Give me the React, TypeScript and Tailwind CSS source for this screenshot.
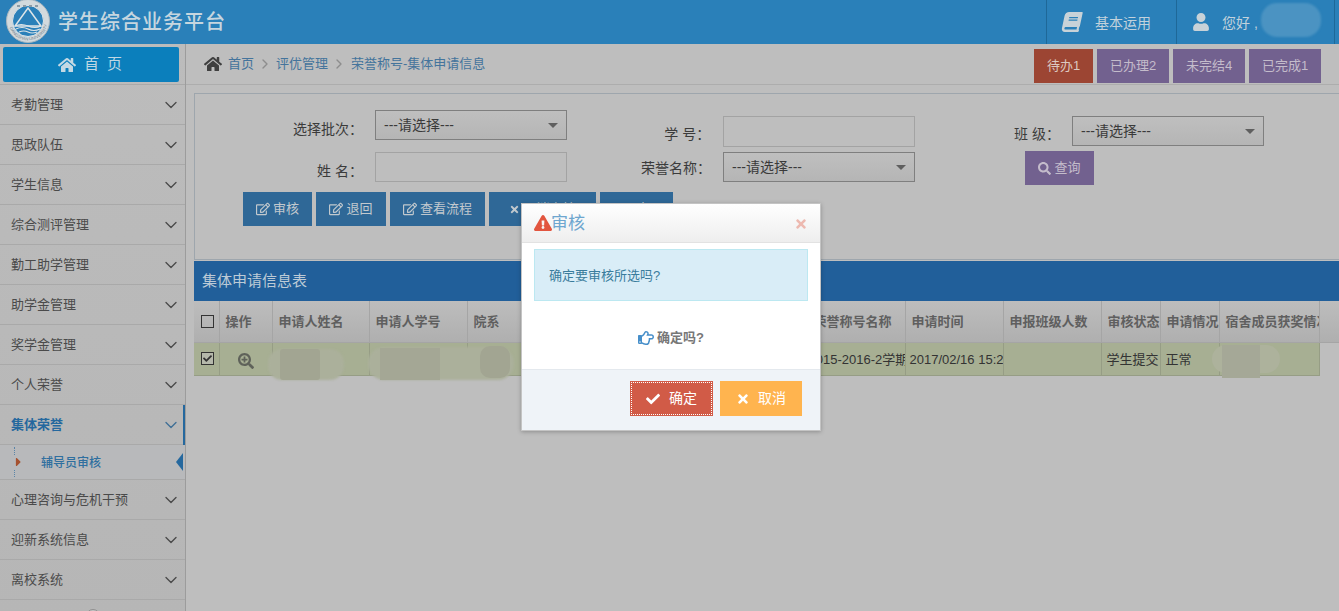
import React from "react";
import { ChevronDown, ChevronRight } from "lucide-react";
import { FaHome, FaBook, FaUser, FaRegEdit, FaTimes, FaSearch, FaSearchPlus, FaCheck, FaRegHandPointRight, FaExclamationTriangle, FaCaretRight } from "react-icons/fa";

const font = { fontFamily: '"Liberation Sans","Noto Sans CJK SC",sans-serif' };

function Logo() {
  return (
    <svg width="48" height="46" viewBox="0 0 48 46" className="shrink-0">
      <circle cx="24" cy="22" r="21.5" fill="#d3dadd" stroke="#aab7bf" strokeWidth="1" />
      <circle cx="24" cy="22" r="15.5" fill="#2a80b9" stroke="#dfe5e8" strokeWidth="1" />
      <path d="M24 9 L37 27 H11 Z" fill="none" stroke="#dfe5e8" strokeWidth="1.5" />
      <path d="M11 27 q6 -3 13 0 t13 0 M12 30 q6 -3 12 0 t12 0 M15 33 q5 -2 9 0 t9 0" fill="none" stroke="#dfe5e8" strokeWidth="1.1" />
      <path id="lg" d="M4.5 25 a19.8 19.8 0 0 0 39 0" fill="none" />
      <text fontSize="4.2" fill="#6d7f8c" fontFamily="Liberation Sans"><textPath href="#lg" startOffset="4">DANGSHAN UNIVERSITY</textPath></text>
      <path d="M13 7 l22 0" stroke="#8b9ba6" strokeWidth="2" strokeDasharray="3 3" />
    </svg>
  );
}

const menu1 = ["考勤管理", "思政队伍", "学生信息", "综合测评管理", "勤工助学管理", "助学金管理", "奖学金管理", "个人荣誉"];
const menu2 = ["心理咨询与危机干预", "迎新系统信息", "离校系统"];

function MenuItem({ label, active }: { label: string; active?: boolean }) {
  return (
    <div className={`h-10 flex items-center justify-between pl-[11px] pr-[4px] border-b border-[#a9a9a9] text-[13px] ${active ? "text-[#25689e] font-bold" : "text-[#4a4a4a]"}`}>
      <span>{label}</span>
      <ChevronDown size={20} strokeWidth={1.6} className={active ? "text-[#3f6f96]" : "text-[#4a4a4a]"} />
    </div>
  );
}

function Caret() {
  return <span className="w-0 h-0 border-x-[5px] border-x-transparent border-t-[5px] border-t-[#5f5f5f]" />;
}

function Select({ cls }: { cls: string }) {
  return (
    <div className={`h-[30px] w-[192px] flex items-center justify-between pl-2 pr-[8px] border border-[#7f7f7f] bg-gradient-to-b from-[#bfbfbf] to-[#b5b5b5] text-[14px] text-[#3a3a3a] ${cls}`}>
      <span className="mt-[1px]">---请选择---</span>
      <Caret />
    </div>
  );
}

function ActionBtn({ w, icon, label }: { w: string; icon: React.ReactNode; label: string }) {
  return (
    <button className={`h-[34px] ${w} bg-[#2f6897] text-[#c2c9ce] text-[13px] flex items-center justify-center gap-[3px]`}>
      {icon}
      <span>{label}</span>
    </button>
  );
}

function TopBtn({ w, label, red }: { w: string; label: string; red?: boolean }) {
  return (
    <div className={`h-[34px] ${w} flex items-center justify-center text-[13px] text-[#c4bccb] ${red ? "bg-[#9c4533] text-[#dcc8c0]" : "bg-[#72618f]"}`}>{label}</div>
  );
}

const cols = [25, 53, 97, 98, 98, 95, 147, 98, 98, 98, 59, 59, 100, 20];
const heads = ["", "操作", "申请人姓名", "申请人学号", "院系", "", "", "荣誉称号名称", "申请时间", "申报班级人数", "审核状态", "申请情况", "宿舍成员获奖情况", ""];
const tdc = "bg-[#a7af93] border-r border-b border-[#969d85]";

export default function App() {
  return (
    <div style={font} className="relative w-full h-[611px] overflow-hidden bg-[#bebebe] flex flex-col">
      {/* header */}
      <header className="h-11 shrink-0 bg-[#2a80b9] flex items-center justify-between">
        <div className="flex items-center pl-[4px] gap-[6px]">
          <Logo />
          <span className="text-[20px] tracking-[1px] text-[#c6d6df] font-medium">学生综合业务平台</span>
        </div>
        <div className="flex h-full pr-[4px]">
          <div className="w-[130px] h-full border-l border-[#1e6898] flex items-center pl-[15px] gap-[13px] text-[14px] text-[#c2d2dc]">
            <FaBook size={20} className="text-[#c8d2d8] -skew-x-[12deg]" />
            <span className="mt-[2px]">基本运用</span>
          </div>
          <div className="relative w-[159px] h-full border-x border-[#1e6898] flex items-center pl-[15px] gap-[12px] text-[14px] text-[#c2d2dc]">
            <FaUser size={18} className="text-[#c8d2d8]" />
            <span className="mt-[2px]">您好 ,</span>
            <div className="absolute left-[84px] top-[3px] w-[60px] h-[34px] rounded-[16px] bg-[#4b93c2] blur-[1px]" />
          </div>
        </div>
      </header>

      <div className="flex flex-1 min-h-0">
        {/* sidebar */}
        <aside className="w-[186px] shrink-0 bg-gradient-to-b from-[#bcbcbc] to-[#b6b6b6] border-r border-[#9c9c9c] pt-[3px]">
          <div className="h-[37px] pl-[3px] pr-[6px]">
            <div className="h-[35px] rounded-[2px] bg-[#0b7fbc] text-[#bfd7e3] flex items-center justify-center gap-[8px] text-[15px]">
              <FaHome size={18} className="text-[#c4d9e4]" />
              <span className="tracking-[8px] -mr-[6px]">首页</span>
            </div>
          </div>
          <div className="border-t border-[#a9a9a9]">
            {menu1.map((m) => <MenuItem key={m} label={m} />)}
            <div className="relative">
              <div className="absolute right-0 top-0 bottom-0 w-[2px] bg-[#25689e]" />
              <MenuItem label="集体荣誉" active />
              <div className="relative h-[35px] border-b border-[#a9a9a9] bg-[#b8b9bb] flex items-center pl-[41px] pt-[1px] text-[12px] font-medium text-[#2f6f9f]">
                <div className="absolute left-[14px] top-[2px] bottom-[2px] border-l border-dotted border-[#5a85a8]" />
                <div className="absolute left-[14px] top-[10px] h-[14px] w-[9px] bg-[#b8b9bb] flex items-center">
                  <FaCaretRight size={14} className="text-[#a5512f]" />
                </div>
                <span>辅导员审核</span>
                <span className="absolute right-[2px] top-[8px] w-0 h-0 border-y-[9px] border-y-transparent border-r-[7px] border-r-[#25689e]" />
              </div>
            </div>
            {menu2.map((m) => <MenuItem key={m} label={m} />)}
            <div className="flex justify-center pt-[9px]">
              <div className="w-[14px] h-[14px] rounded-full border border-[#8f8f8f] bg-[#c4c4c4]" />
            </div>
          </div>
        </aside>

        {/* main */}
        <main className="flex-1 min-w-0 flex flex-col">
          <div className="h-[41px] shrink-0 border-b border-[#adadad] flex items-center justify-between pl-[18px] pr-[18px]">
            <div className="flex items-center text-[13px] text-[#44749c]">
              <FaHome size={18} className="text-[#3f3f3f] mr-[6px] -mt-[1px]" />
              <span>首页</span>
              <ChevronRight size={16} className="mx-[3px] text-[#8d8d8d]" />
              <span>评优管理</span>
              <ChevronRight size={16} className="ml-[3px] mr-[4px] text-[#8d8d8d]" />
              <span>荣誉称号-集体申请信息</span>
            </div>
            <div className="flex gap-1 mt-[3px]">
              <TopBtn w="w-[59px]" label="待办1" red />
              <TopBtn w="w-[72px]" label="已办理2" />
              <TopBtn w="w-[72px]" label="未完结4" />
              <TopBtn w="w-[72px]" label="已完成1" />
            </div>
          </div>

          <div className="pl-2 pt-2 flex flex-col">
            {/* search form */}
            <section className="h-[167px] border border-[#9ea6ad] border-r-0 pt-[16px] text-[14px] text-[#3b3b3b]">
              <div className="flex">
                <div className="w-[372px] shrink-0 flex flex-col gap-3">
                  <div className="flex items-center h-[30px]">
                    <span className="w-[168px] text-right mt-[8px]">选择批次：</span>
                    <Select cls="ml-[12px]" />
                  </div>
                  <div className="flex items-center h-[30px]">
                    <span className="w-[168px] text-right mt-[8px]">姓 名：</span>
                    <div className="ml-[12px] w-[192px] h-[30px] border border-[#a3a3a3]" />
                  </div>
                </div>
                <div className="w-[348px] shrink-0 flex flex-col pt-[6px] gap-[5px]">
                  <div className="flex items-center h-[31px]">
                    <span className="w-[144px] text-right mt-[6px]">学 号：</span>
                    <div className="ml-[13px] w-[193px] h-[31px] border border-[#a3a3a3]" />
                  </div>
                  <div className="flex items-center h-[30px]">
                    <span className="w-[144px] text-right mt-[2px]">荣誉名称：</span>
                    <Select cls="ml-[12px]" />
                  </div>
                </div>
                <div className="flex flex-col pt-[6px]">
                  <div className="flex items-center h-[30px]">
                    <span className="w-[144px] text-right mt-[7px] ml-[1px]">班 级：</span>
                    <Select cls="ml-[12px]" />
                  </div>
                  <button className="ml-[110px] mt-[5px] h-[34px] w-[69px] bg-[#72618f] text-[#c4bccb] text-[13px] flex items-center justify-center gap-[3px]">
                    <FaSearch size={13} />
                    <span>查询</span>
                  </button>
                </div>
              </div>
              <div className="flex gap-1 pl-[48px] mt-[7px]">
                <ActionBtn w="w-[69px]" icon={<FaRegEdit size={14} />} label="审核" />
                <ActionBtn w="w-[70px]" icon={<FaRegEdit size={14} />} label="退回" />
                <ActionBtn w="w-[95px]" icon={<FaRegEdit size={14} />} label="查看流程" />
                <ActionBtn w="w-[107px]" icon={<FaTimes size={11} />} label="取消审核" />
                <ActionBtn w="w-[73px]" icon={null} label="导出" />
              </div>
            </section>

            {/* table */}
            <div className="h-[40px] mt-px bg-[#215f9a] text-[#bccad6] text-[15px] flex items-center pl-2">集体申请信息表</div>
            <table className="table-fixed border-collapse w-[1145px] text-[13px]">
              <colgroup>
                {cols.map((c, i) => <col key={i} style={{ width: c }} />)}
              </colgroup>
              <thead>
                <tr className="h-[41px] bg-gradient-to-b from-[#bdbdbd] to-[#afafaf]">
                  {heads.map((h, i) => (
                    <th key={i} className="border-r border-b border-[#a5a5a5] px-[6px] text-left font-bold text-[#5f5f5f] whitespace-nowrap overflow-hidden">
                      {i === 0 ? <div className="w-[13px] h-[13px] border border-[#333] ml-[1px]" /> : h}
                    </th>
                  ))}
                </tr>
              </thead>
              <tbody>
                <tr className="h-[33px] text-[#333]">
                  <td className={`${tdc} px-[7px] align-top pt-[9px]`}>
                    <div className="w-[13px] h-[13px] border border-[#333] flex items-center justify-center bg-[#b5b8ab]">
                      <FaCheck size={9} className="text-[#333]" />
                    </div>
                  </td>
                  <td className={`${tdc} text-center pt-[3px] pl-[1px]`}>
                    <FaSearchPlus size={16} className="inline text-[#5f625a]" />
                  </td>
                  <td className={tdc} />
                  <td className={tdc} />
                  <td className={tdc} />
                  <td className={tdc} />
                  <td className={tdc} />
                  <td className={`${tdc} pl-[1px] pt-[2px] whitespace-nowrap overflow-hidden`}>2015-2016-2学期</td>
                  <td className={`${tdc} pl-[4px] pt-[2px] whitespace-nowrap overflow-hidden`}>2017/02/16 15:20</td>
                  <td className={tdc} />
                  <td className={`${tdc} pl-[5px] pt-[2px] whitespace-nowrap overflow-hidden`}>学生提交</td>
                  <td className={`${tdc} pl-[5px] pt-[2px]`}>正常</td>
                  <td className={tdc} />
                </tr>
              </tbody>
            </table>
          </div>
        </main>
      </div>

      {/* mosaic patches over private cells */}
      <div className="absolute left-[268px] top-[349px] w-[76px] h-[31px] rounded-[14px] bg-[#abb09b] blur-[1px]" />
      <div className="absolute left-[280px] top-[349px] w-[40px] h-[31px] rounded-[3px] bg-[#a2a592]" />
      <div className="absolute left-[368px] top-[347px] w-[146px] h-[33px] rounded-[16px] bg-[#abb09b] blur-[1px]" />
      <div className="absolute left-[380px] top-[348px] w-[60px] h-[32px] bg-[#a4a795]" />
      <div className="absolute left-[480px] top-[346px] w-[30px] h-[32px] rounded-[10px] bg-[#a2a592]" />
      <div className="absolute left-[1212px] top-[345px] w-[68px] h-[28px] rounded-[14px] bg-[#adb29c]" />
      <div className="absolute left-[1222px] top-[345px] w-[38px] h-[33px] bg-[#a5a897]" />

      {/* modal */}
      <div className="absolute left-[521px] top-[203px] w-[300px] h-[228px] bg-white border border-[#c4c4c4] shadow-[0_1px_4px_rgba(0,0,0,0.25)] flex flex-col">
        <div className="h-[39px] shrink-0 border-b border-[#e2e2e2] bg-gradient-to-b from-white to-[#eeeeee] flex items-center justify-between pl-[12px] pr-[12px]">
          <div className="flex items-center text-[17px] text-[#6ea6cf]">
            <FaExclamationTriangle size={18} className="text-[#e2553f]" />
            <span className="-ml-[1px] mt-[2px]">审核</span>
          </div>
          <FaTimes size={14} className="text-[#edb9b0] mt-[2px]" />
        </div>
        <div className="flex-1 px-3 pt-[6px] flex flex-col">
          <div className="h-[52px] border border-[#bce8f1] bg-[#d9edf7] flex items-center pl-[14px] pt-[2px] text-[13px] text-[#3a7c9c]">确定要审核所选吗?</div>
          <div className="flex-1 flex items-center justify-center gap-[3px] text-[13px] font-bold text-[#777] mt-[6px]">
            <FaRegHandPointRight size={16} className="text-[#478fca]" />
            <span>确定吗?</span>
          </div>
        </div>
        <div className="h-[61px] shrink-0 bg-[#eff3f8] border-t border-[#e4e9ee] flex items-center justify-end gap-[7px] pr-[18px] pb-[3px]">
          <button className="h-[35px] w-[83px] bg-[#d15b47] text-white text-[14px] flex items-center justify-center gap-[9px] outline-1 outline-dotted outline-white -outline-offset-2">
            <FaCheck size={14} />
            <span>确定</span>
          </button>
          <button className="h-[35px] w-[82px] bg-[#ffb44f] text-white text-[14px] flex items-center justify-center gap-[8px]">
            <FaTimes size={14} />
            <span>取消</span>
          </button>
        </div>
      </div>
    </div>
  );
}
